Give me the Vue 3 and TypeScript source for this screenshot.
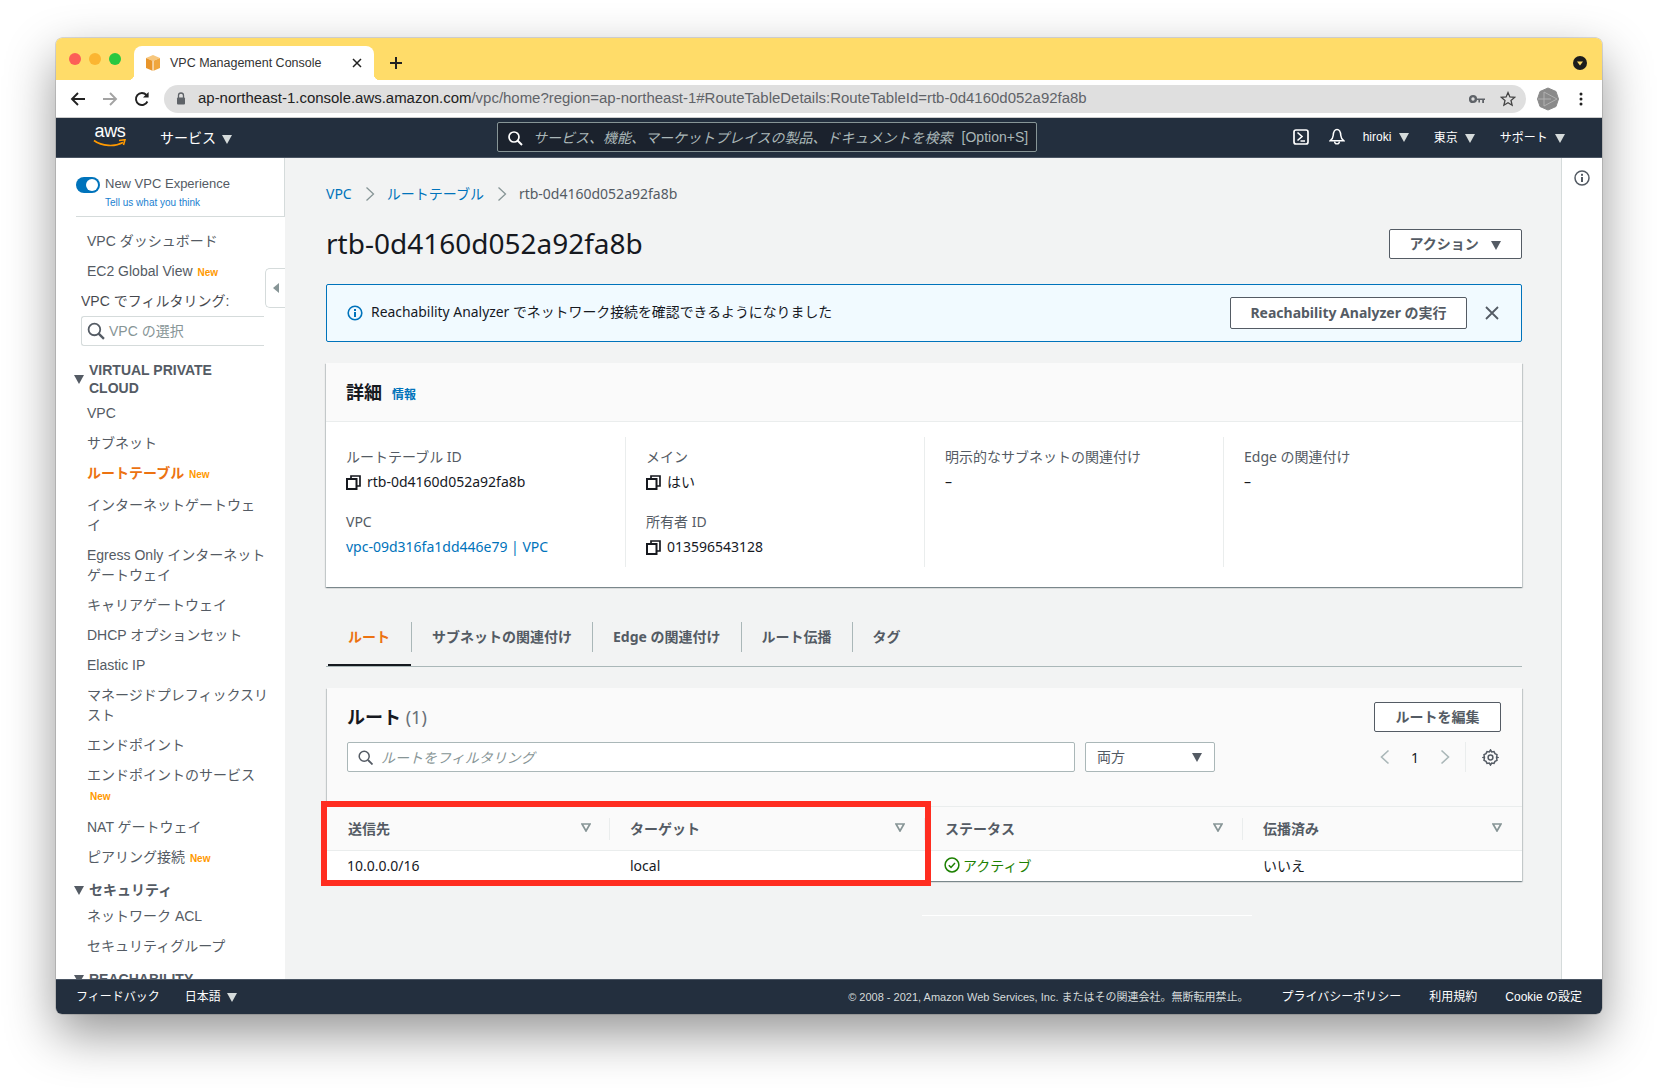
<template>
  <div class="page">
    <div class="window">
      <div class="titlebar">
        <div class="lights">
          <span class="light red"></span>
          <span class="light amber"></span>
          <span class="light green"></span>
        </div>
        <div class="tab">
          <svg class="tab-icon" width="16" height="18" viewBox="0 0 16 18">
            <polygon points="8,1 15,4 8,7 1,4" fill="#f7c77d" />
            <polygon points="1,4 8,7 8,17 1,14" fill="#e8952b" />
            <polygon points="15,4 8,7 8,17 15,14" fill="#f0a63e" />
            <line x1="8" y1="7" x2="8" y2="17" stroke="#fff" stroke-width="1" />
          </svg>
          <span class="tab-title">VPC Management Console</span>
          <svg class="tab-close" width="10" height="10" viewBox="0 0 10 10">
            <path d="M1 1l8 8M9 1l-8 8" stroke="#222" stroke-width="1.5" />
          </svg>
        </div>
        <svg class="new-tab" width="14" height="14" viewBox="0 0 14 14">
          <path d="M7 1v12M1 7h12" stroke="#222" stroke-width="2" />
        </svg>
        <svg class="profile-dot" width="14" height="14" viewBox="0 0 14 14">
          <circle cx="7" cy="7" r="7" fill="#1d1d1d" />
          <polygon points="4,5.5 10,5.5 7,9.5" fill="#ffdc69" />
        </svg>
      </div>

      <div class="toolbar">
        <svg class="tool" width="16" height="16" viewBox="0 0 16 16">
          <path d="M15 8H2M8 2L2 8l6 6" fill="none" stroke="#222" stroke-width="1.9" />
        </svg>
        <svg class="tool dim" width="16" height="16" viewBox="0 0 16 16">
          <path d="M1 8h13M8 2l6 6-6 6" fill="none" stroke="#a3a3a3" stroke-width="1.9" />
        </svg>
        <svg class="tool" width="16" height="16" viewBox="0 0 16 16">
          <path d="M13.4 10.5A6 6 0 1 1 12.4 4" fill="none" stroke="#222" stroke-width="1.9" />
          <polygon points="9,6.6 14.6,6.6 14.6,1" fill="#222" />
        </svg>
        <div class="urlbar">
          <svg width="10" height="13" viewBox="0 0 10 13">
            <path d="M2.5 6V3.5a2.5 2.5 0 0 1 5 0V6" fill="none" stroke="#5f6368" stroke-width="1.3" />
            <rect x="1" y="5.5" width="8" height="7" rx="1" fill="#5f6368" />
          </svg>
          <span class="url"><span class="url-host">ap-northeast-1.console.aws.amazon.com</span>/vpc/home?region=ap-northeast-1#RouteTableDetails:RouteTableId=rtb-0d4160d052a92fa8b</span>
          <svg class="url-key" width="16" height="10" viewBox="0 0 16 10">
            <circle cx="4" cy="5" r="2.9" fill="none" stroke="#5f6368" stroke-width="2.4" />
            <path d="M7 4.4h9v1.6h-1v3h-1.8V6H11v2.4H9.4V6H7z" fill="#5f6368" />
          </svg>
          <svg width="16" height="16" viewBox="0 0 16 16">
            <polygon points="8,1.6 9.9,6 14.6,6.4 11,9.5 12.1,14.2 8,11.7 3.9,14.2 5,9.5 1.4,6.4 6.1,6" fill="none" stroke="#444" stroke-width="1.3" />
          </svg>
        </div>
        <svg class="avatar" width="22" height="24" viewBox="0 0 22 24">
          <polygon points="11,1 19,4.5 21.5,12 19,19.5 11,23 3,19.5 .5,12 3,4.5" fill="#8a8a8a" stroke="#8a8a8a" stroke-linejoin="round" />
          <path d="M7 5v14l13-7z" fill="none" stroke="#b0b0b0" stroke-width="1" />
          <path d="M1 12h13" stroke="#b0b0b0" stroke-width="1" />
        </svg>
        <svg width="4" height="16" viewBox="0 0 4 16">
          <circle cx="2" cy="3" r="1.5" fill="#222" />
          <circle cx="2" cy="8" r="1.5" fill="#222" />
          <circle cx="2" cy="13" r="1.5" fill="#222" />
        </svg>
      </div>

      <header class="topnav">
        <div class="aws-logo">
          <span class="aws-text">aws</span>
          <svg width="34" height="9" viewBox="0 0 34 9">
            <path d="M1 1.5C9 7.5 22 8 30 3.5" fill="none" stroke="#f90" stroke-width="1.7" />
            <path d="M26 1.5l6-.8-1.5 5.3" fill="none" stroke="#f90" stroke-width="1.6" />
          </svg>
        </div>
        <span class="services">サービス <i class="tri"></i></span>
        <div class="global-search">
          <svg class="search-glass" width="16" height="16" viewBox="0 0 16 16">
            <circle cx="7" cy="7" r="5" fill="none" stroke="#fff" stroke-width="1.7" />
            <path d="M10.5 10.5L15 15" stroke="#fff" stroke-width="1.9" />
          </svg>
          <span class="search-hint">サービス、機能、マーケットプレイスの製品、ドキュメントを検索</span>
          <span class="search-key">[Option+S]</span>
        </div>
        <div class="nav-right">
          <svg width="16" height="16" viewBox="0 0 16 16">
            <rect x="1" y="1" width="14" height="14" rx="2" fill="none" stroke="#fff" stroke-width="1.7" />
            <path d="M4.5 3.5L9 7.5l-4.5 4M7.5 12h4.5" fill="none" stroke="#fff" stroke-width="1.6" />
          </svg>
          <svg class="bell" width="16" height="18" viewBox="0 0 16 18">
            <path d="M8 1.5c2.6 0 3.6 3 3.8 6 .1 2 1 3.6 3 5.3H1.2c2-1.7 2.9-3.3 3-5.3.2-3 1.2-6 3.8-6z" fill="none" stroke="#fff" stroke-width="1.5" />
            <path d="M5.6 13.5a2.4 2.4 0 0 0 4.8 0" fill="none" stroke="#fff" stroke-width="1.4" />
          </svg>
          <span class="nav-item user">hiroki <i class="tri"></i></span>
          <span class="nav-item region">東京 <i class="tri"></i></span>
          <span class="nav-item">サポート <i class="tri"></i></span>
        </div>
      </header>

      <div class="body">
        <aside class="sidebar">
          <div class="experience">
            <span class="toggle"><span class="knob"></span></span>
            <div>
              <div class="exp-title">New VPC Experience</div>
              <div class="exp-link">Tell us what you think</div>
            </div>
          </div>
          <nav class="side-nav">
            <a class="side-link">VPC ダッシュボード</a>
            <a class="side-link">EC2 Global View <em class="new">New</em></a>
            <div class="filter-label">VPC でフィルタリング:</div>
            <div class="vpc-filter">
              <svg width="18" height="18" viewBox="0 0 17 17">
                <circle cx="7" cy="7" r="5.5" fill="none" stroke="#545b64" stroke-width="1.7" />
                <path d="M11 11l5 5" stroke="#545b64" stroke-width="2.2" />
              </svg>
              <span>VPC の選択</span>
            </div>
            <div class="side-section first"><i class="tri dark"></i><span>VIRTUAL PRIVATE<br />CLOUD</span></div>
            <a class="side-link">VPC</a>
            <a class="side-link">サブネット</a>
            <a class="side-link active">ルートテーブル <em class="new">New</em></a>
            <a class="side-link">インターネットゲートウェ<br />イ</a>
            <a class="side-link">Egress Only インターネット<br />ゲートウェイ</a>
            <a class="side-link">キャリアゲートウェイ</a>
            <a class="side-link">DHCP オプションセット</a>
            <a class="side-link">Elastic IP</a>
            <a class="side-link">マネージドプレフィックスリ<br />スト</a>
            <a class="side-link">エンドポイント</a>
            <a class="side-link">エンドポイントのサービス<br /><em class="new solo">New</em></a>
            <a class="side-link">NAT ゲートウェイ</a>
            <a class="side-link">ピアリング接続 <em class="new">New</em></a>
            <div class="side-section second"><i class="tri dark"></i><span>セキュリティ</span></div>
            <a class="side-link">ネットワーク ACL</a>
            <a class="side-link">セキュリティグループ</a>
            <div class="side-section"><i class="tri dark"></i><span>REACHABILITY</span></div>
          </nav>
          <div class="collapse-tab"><i class="tri-left"></i></div>
        </aside>

        <main class="main">
          <div class="breadcrumb">
            <a class="link">VPC</a>
            <svg class="crumb-sep" width="10" height="16" viewBox="0 0 10 16"><path d="M1.5 1.5L8.5 8l-7 6.5" fill="none" stroke="#879596" stroke-width="1.3" /></svg>
            <a class="link">ルートテーブル</a>
            <svg class="crumb-sep" width="10" height="16" viewBox="0 0 10 16"><path d="M1.5 1.5L8.5 8l-7 6.5" fill="none" stroke="#879596" stroke-width="1.3" /></svg>
            <span>rtb-0d4160d052a92fa8b</span>
          </div>

          <div class="title-row">
            <h1>rtb-0d4160d052a92fa8b</h1>
            <button class="btn action">アクション <i class="tri grey"></i></button>
          </div>

          <div class="alert">
            <svg width="16" height="16" viewBox="0 0 16 16">
              <circle cx="8" cy="8" r="6.8" fill="none" stroke="#0073bb" stroke-width="1.6" />
              <rect x="7" y="7" width="2" height="5" fill="#0073bb" />
              <rect x="7" y="4" width="2" height="2" fill="#0073bb" />
            </svg>
            <span class="alert-text">Reachability Analyzer でネットワーク接続を確認できるようになりました</span>
            <button class="btn alert-btn">Reachability Analyzer の実行</button>
            <svg class="alert-close" width="14" height="14" viewBox="0 0 14 14">
              <path d="M1 1l12 12M13 1L1 13" stroke="#545b64" stroke-width="1.8" />
            </svg>
          </div>

          <section class="card">
            <div class="card-head">
              <h2>詳細</h2>
              <a class="info-link">情報</a>
            </div>
            <div class="detail-grid">
              <div class="detail-col">
                <div class="field">
                  <div class="field-label">ルートテーブル ID</div>
                  <div class="field-value"><svg class="copy" width="15" height="15" viewBox="0 0 15 15"><use href="#copy-icon" /></svg>rtb-0d4160d052a92fa8b</div>
                </div>
                <div class="field">
                  <div class="field-label">VPC</div>
                  <div class="field-value"><a class="link">vpc-09d316fa1dd446e79 | VPC</a></div>
                </div>
              </div>
              <div class="detail-col">
                <div class="field">
                  <div class="field-label">メイン</div>
                  <div class="field-value"><svg class="copy" width="15" height="15" viewBox="0 0 15 15"><use href="#copy-icon" /></svg>はい</div>
                </div>
                <div class="field">
                  <div class="field-label">所有者 ID</div>
                  <div class="field-value"><svg class="copy" width="15" height="15" viewBox="0 0 15 15"><use href="#copy-icon" /></svg>013596543128</div>
                </div>
              </div>
              <div class="detail-col">
                <div class="field">
                  <div class="field-label">明示的なサブネットの関連付け</div>
                  <div class="field-value">–</div>
                </div>
              </div>
              <div class="detail-col">
                <div class="field">
                  <div class="field-label">Edge の関連付け</div>
                  <div class="field-value">–</div>
                </div>
              </div>
            </div>
          </section>

          <div class="tabs">
            <span v-for="(t, i) in tabs" :key="t" class="tab-item" :class="{ current: i === 0 }">{{ t }}</span>
          </div>

          <section class="routes">
            <div class="routes-head">
              <div class="routes-title">
                <h2>ルート <span class="count">(1)</span></h2>
                <button class="btn edit">ルートを編集</button>
              </div>
              <div class="routes-tools">
                <div class="route-filter">
                  <svg width="15" height="15" viewBox="0 0 15 15">
                    <circle cx="6.2" cy="6.2" r="5" fill="none" stroke="#545b64" stroke-width="1.5" />
                    <path d="M10 10l4.5 4.5" stroke="#545b64" stroke-width="1.8" />
                  </svg>
                  <span>ルートをフィルタリング</span>
                </div>
                <div class="route-select"><span>両方</span> <i class="tri grey"></i></div>
                <div class="pager">
                  <svg width="10" height="16" viewBox="0 0 10 16"><path d="M8.5 1.5L1.5 8l7 6.5" fill="none" stroke="#aab7b8" stroke-width="1.6" /></svg>
                  <span class="page-no">1</span>
                  <svg width="10" height="16" viewBox="0 0 10 16"><path d="M1.5 1.5L8.5 8l-7 6.5" fill="none" stroke="#aab7b8" stroke-width="1.6" /></svg>
                </div>
                <div class="settings">
                  <svg width="17" height="17" viewBox="0 0 17 17">
                    <path d="M8.5 1l1.2 2 2.3-.4 1 2 2 1-.4 2.4 1 .5-1 .5.4 2.4-2 1-1 2-2.3-.4-1.2 2-1.2-2-2.3.4-1-2-2-1 .4-2.4-1-.5 1-.5-.4-2.4 2-1 1-2 2.3.4z" fill="none" stroke="#545b64" stroke-width="1.5" />
                    <circle cx="8.5" cy="8.5" r="2.4" fill="none" stroke="#545b64" stroke-width="1.5" />
                  </svg>
                </div>
              </div>
            </div>

            <div class="table-wrap">
              <div class="t-row t-head">
                <div v-for="c in columns" :key="c" class="t-cell">
                  <span>{{ c }}</span>
                  <svg width="10" height="9" viewBox="0 0 10 9"><polygon points="1,1 9,1 5,8" fill="none" stroke="#879596" stroke-width="1.7" /></svg>
                </div>
              </div>
              <div class="t-row t-body">
                <div class="t-cell">10.0.0.0/16</div>
                <div class="t-cell">local</div>
                <div class="t-cell status">
                  <svg width="16" height="16" viewBox="0 0 16 16">
                    <circle cx="8" cy="8" r="6.9" fill="none" stroke="#1d8102" stroke-width="1.5" />
                    <path d="M4.8 8.2l2.2 2.2 4-4.4" fill="none" stroke="#1d8102" stroke-width="1.5" />
                  </svg>
                  アクティブ
                </div>
                <div class="t-cell">いいえ</div>
              </div>
              <div class="red-box"></div>
            </div>
          </section>
          <div class="page-end"></div>
        </main>

        <div class="help-rail">
          <svg width="16" height="16" viewBox="0 0 16 16">
            <circle cx="8" cy="8" r="7" fill="none" stroke="#545b64" stroke-width="1.5" />
            <rect x="7" y="7" width="2" height="5" fill="#545b64" />
            <rect x="7" y="3.8" width="2" height="2" fill="#545b64" />
          </svg>
        </div>
      </div>

      <footer class="footer">
        <span class="foot-link feedback">フィードバック</span>
        <span class="foot-link">日本語 <i class="tri"></i></span>
        <span class="copyright">© 2008 - 2021, Amazon Web Services, Inc. またはその関連会社。無断転用禁止。</span>
        <span class="foot-link">プライバシーポリシー</span>
        <span class="foot-link">利用規約</span>
        <span class="foot-link">Cookie の設定</span>
      </footer>

      <svg width="0" height="0" class="defs">
        <symbol id="copy-icon" viewBox="0 0 15 15">
          <path d="M5 3V1h9v10h-3" fill="none" stroke="#16191f" stroke-width="1.7" />
          <rect x="1" y="4" width="9.5" height="10" fill="none" stroke="#16191f" stroke-width="2" />
        </symbol>
      </svg>
    </div>
  </div>
</template>

<script setup lang="ts">
const tabs: string[] = ['ルート', 'サブネットの関連付け', 'Edge の関連付け', 'ルート伝播', 'タグ']
const columns: string[] = ['送信先', 'ターゲット', 'ステータス', '伝播済み']
</script>

<style scoped>
.page {
  height: 1088px;
  box-sizing: border-box;
  padding: 38px 0 0 56px;
  overflow: hidden;
}

.window {
  width: 1546px;
  height: 976px;
  display: flex;
  flex-direction: column;
  border-radius: 6px;
  overflow: hidden;
  box-shadow: 0 0 0 0.5px rgba(0, 0, 0, 0.25), 0 20px 50px rgba(0, 0, 0, 0.42);
  font-family: "Noto Sans", "Noto Sans CJK JP", sans-serif;
  color: #16191f;
  font-size: 14px;
}

.defs {
  position: absolute;
}

.titlebar {
  height: 42px;
  flex: none;
  background: #ffdc69;
  display: flex;
  align-items: flex-end;
}

.lights {
  display: flex;
  gap: 8px;
  padding: 0 13px;
  align-self: flex-start;
  margin-top: 15px;
}

.light {
  width: 12px;
  height: 12px;
  border-radius: 50%;
}

.red { background: #fc5f57; }
.amber { background: #fbb531; }
.green { background: #28c840; }

.tab {
  width: 240px;
  height: 34px;
  background: #fff;
  border-radius: 8px 8px 0 0;
  display: flex;
  align-items: center;
  padding: 0 12px 0 11px;
  box-sizing: border-box;
  position: relative;
}

.tab::before,
.tab::after {
  content: "";
  position: absolute;
  bottom: 0;
  width: 6px;
  height: 6px;
}

.tab::before {
  left: -6px;
  background: radial-gradient(circle at 0 0, #ffdc69 6px, #fff 6.5px);
}

.tab::after {
  right: -6px;
  background: radial-gradient(circle at 100% 0, #ffdc69 6px, #fff 6.5px);
}

.tab-icon {
  margin-right: 9px;
}

.tab-title {
  flex: 1;
  font-family: "Liberation Sans", sans-serif;
  font-size: 12.5px;
  color: #333;
}

.new-tab {
  margin: 0 0 10px 15px;
}

.profile-dot {
  margin: 0 15px 10px auto;
}

.toolbar {
  height: 38px;
  flex: none;
  box-sizing: border-box;
  background: #fff;
  border-bottom: 1px solid #ccc;
  display: flex;
  align-items: center;
  padding-left: 14px;
}

.tool {
  margin-right: 16px;
}

.urlbar {
  width: 1362px;
  height: 28px;
  margin-left: -2px;
  background: #dfdfdf;
  border-radius: 14px;
  display: flex;
  align-items: center;
  padding: 0 10px 0 12px;
  box-sizing: border-box;
}

.url {
  margin-left: 12px;
  padding-bottom: 2px;
  flex: 1;
  font-family: "Liberation Sans", sans-serif;
  font-size: 14.96px;
  color: #5f6368;
  white-space: nowrap;
}

.url-host {
  color: #222;
}

.url-key {
  margin-right: 15px;
}

.avatar {
  margin: 0 20px 0 11px;
}

.topnav {
  height: 40px;
  flex: none;
  background: #232f3e;
  border-bottom: 1px solid #4a5563;
  box-sizing: border-box;
  padding-bottom: 2px;
  display: flex;
  align-items: center;
  color: #fff;
  font-family: "Liberation Sans", "Noto Sans CJK JP", sans-serif;
}

.aws-logo {
  width: 34px;
  margin-left: 37px;
  display: flex;
  flex-direction: column;
  align-items: center;
}

.aws-text {
  font-size: 18px;
  line-height: 15px;
  margin-top: -2px;
  letter-spacing: -0.3px;
}

.nav-item {
  font-size: 12px;
  white-space: nowrap;
}

.services {
  margin-left: 33px;
  width: 77px;
  font-size: 14px;
  white-space: nowrap;
}

.services .tri {
  margin-left: 2px;
}

.tri {
  display: inline-block;
  width: 0;
  height: 0;
  border-left: 5px solid transparent;
  border-right: 5px solid transparent;
  border-top: 9px solid #d5dbdb;
  margin-left: 4px;
  vertical-align: -1px;
}

.tri.dark {
  border-top-color: #545b64;
  margin: 0;
}

.tri.grey {
  border-top-color: #545b64;
}

.global-search {
  width: 540px;
  height: 30px;
  margin-left: 260px;
  box-sizing: border-box;
  border: 1px solid #879596;
  border-radius: 2px;
  background: #1b222d;
  display: flex;
  align-items: center;
  padding-left: 9px;
  color: #aab7b8;
}

.search-glass {
  margin-top: 3px;
}

.search-hint {
  margin-left: 10px;
  font-style: italic;
  font-size: 14px;
  white-space: nowrap;
}

.search-key {
  margin-left: 9px;
  font-size: 14px;
  white-space: nowrap;
}

.nav-right {
  margin-left: auto;
  display: flex;
  align-items: center;
  padding-right: 37px;
}

.bell {
  margin-left: 20px;
}

.user {
  margin-left: 18px;
  width: 71px;
}

.region {
  width: 66px;
}

.body {
  flex: 1;
  min-height: 0;
  display: flex;
  background: #f2f3f3;
}

.sidebar {
  width: 229px;
  flex: none;
  background: #fff;
  position: relative;
  font-family: "Liberation Sans", "Noto Sans CJK JP", sans-serif;
  color: #545b64;
  overflow: hidden;
}

.experience {
  height: 59px;
  box-sizing: border-box;
  margin-left: 20px;
  padding-top: 17px;
  display: flex;
  gap: 5px;
  border-bottom: 1px solid #d5dbdb;
  border-right: 1px solid #d5dbdb;
}

.toggle {
  width: 24px;
  height: 16px;
  margin-top: 2px;
  flex: none;
  background: #0073bb;
  border-radius: 8px;
  display: flex;
  justify-content: flex-end;
  align-items: center;
  padding-right: 2px;
  box-sizing: border-box;
}

.knob {
  width: 12px;
  height: 12px;
  border-radius: 50%;
  background: #fff;
}

.exp-title {
  font-size: 13px;
  line-height: 18px;
}

.exp-link {
  font-size: 10px;
  line-height: 12px;
  margin-top: 4px;
  color: #1a7fd0;
}

.side-nav {
  padding: 14px 17px 0 31px;
  line-height: 20px;
  font-size: 14px;
  white-space: nowrap;
}

.side-link {
  display: block;
  margin-bottom: 10px;
}

.side-link.active {
  color: #ec7211;
  font-weight: 700;
}

.new {
  font-style: normal;
  font-weight: 700;
  font-size: 10px;
  color: #ff9900;
  margin-left: 1px;
}

.new.solo {
  margin-left: 3px;
}

.filter-label {
  margin: -2px 0 0 -6px;
  color: #16191f;
  opacity: 0.8;
}

.vpc-filter {
  margin: 5px 4px 0 -6px;
  height: 30px;
  box-sizing: border-box;
  border: 1px solid #d5dbdb;
  border-right: none;
  border-radius: 3px 0 0 3px;
  display: flex;
  align-items: center;
  padding-left: 5px;
  gap: 4px;
  color: #879596;
}

.side-section {
  display: flex;
  align-items: center;
  gap: 5px;
  margin: 14px 0 7px -13px;
  font-weight: 700;
  line-height: 18px;
  color: #545b64;
}

.side-section.first {
  margin: 15px 0 6px -13px;
}

.side-section.second {
  margin: 12px 0 7px -13px;
}

.collapse-tab {
  position: absolute;
  top: 110px;
  right: 0;
  width: 20px;
  height: 40px;
  box-sizing: border-box;
  border: 1px solid #d5dbdb;
  border-right: none;
  border-radius: 5px 0 0 5px;
  background: #fff;
  display: flex;
  align-items: center;
  justify-content: center;
}

.tri-left {
  width: 0;
  height: 0;
  border-top: 5px solid transparent;
  border-bottom: 5px solid transparent;
  border-right: 6px solid #879596;
}

.main {
  flex: 1;
  min-width: 0;
  padding: 26px 39px 0 41px;
}

.link {
  color: #0073bb;
}

.breadcrumb {
  height: 20px;
  display: flex;
  align-items: center;
  color: #545b64;
  line-height: 20px;
}

.crumb-sep {
  margin: 0 12px 0 13px;
}

.title-row {
  height: 30px;
  margin-top: 25px;
  display: flex;
  justify-content: space-between;
  align-items: center;
}

h1 {
  margin: 0;
  font-size: 28px;
  font-weight: 400;
  line-height: 30px;
  padding-bottom: 2px;
}

.btn {
  font-family: inherit;
  font-size: 14px;
  font-weight: 700;
  color: #545b64;
  background: #fff;
  border: 1px solid #545b64;
  border-radius: 2px;
  padding: 0 0 2px;
  box-sizing: border-box;
  white-space: nowrap;
}

.action {
  width: 133px;
  height: 30px;
}

.action .tri {
  margin-left: 9px;
}

.alert {
  height: 58px;
  margin-top: 25px;
  box-sizing: border-box;
  background: #f1faff;
  border: 1px solid #0073bb;
  border-radius: 2px;
  display: flex;
  align-items: center;
  padding: 0 22px 0 20px;
}

.alert-text {
  flex: 1;
  margin-left: 8px;
  padding-bottom: 4px;
  font-size: 13.9px;
}

.alert-btn {
  width: 237px;
  height: 32px;
}

.alert-close {
  margin-left: 18px;
}

.card {
  height: 224px;
  margin-top: 21px;
  background: #fff;
  box-shadow: 0 1px 1px 0 rgba(0, 28, 36, 0.3), 1px 1px 1px 0 rgba(0, 28, 36, 0.15), -1px 1px 1px 0 rgba(0, 28, 36, 0.15);
}

.card-head {
  height: 59px;
  box-sizing: border-box;
  background: #fafafa;
  border-bottom: 1px solid #eaeded;
  padding-left: 20px;
  display: flex;
  align-items: center;
  gap: 12px;
}

h2 {
  margin: 0;
  font-size: 18px;
  font-weight: 700;
  line-height: 24px;
}

.info-link {
  font-size: 12px;
  font-weight: 700;
  color: #0073bb;
  padding-top: 4px;
  margin-left: -2px;
}

.detail-grid {
  display: grid;
  grid-template-columns: 300px 299px 299px 298px;
  padding-top: 15px;
}

.detail-col {
  height: 130px;
  box-sizing: border-box;
  padding-left: 20px;
  border-right: 1px solid #eaeded;
}

.detail-col:last-child {
  border-right: none;
}

.field {
  height: 65px;
  padding-top: 10px;
  box-sizing: border-box;
}

.field-label {
  line-height: 20px;
  color: #545b64;
}

.field-value {
  line-height: 20px;
  margin-top: 5px;
  display: flex;
  align-items: center;
}

.copy {
  margin-right: 6px;
}

.tabs {
  height: 45px;
  margin-top: 35px;
  box-sizing: border-box;
  border-bottom: 1px solid #aab7b8;
  display: flex;
}

.tab-item {
  height: 30px;
  line-height: 30px;
  padding: 0 20px;
  color: #545b64;
  font-weight: 700;
  border-right: 1px solid #aab7b8;
  white-space: nowrap;
}

.tab-item:last-child {
  border-right: none;
}

.tab-item.current {
  width: 84px;
  margin-left: 2px;
  box-sizing: border-box;
  color: #ec7211;
  position: relative;
}

.tab-item.current::after {
  content: "";
  position: absolute;
  left: 0;
  right: 0;
  top: 42px;
  height: 2px;
  background: #16191f;
}

.routes {
  margin: 21px 0 0 1px;
  background: #fff;
  box-shadow: 0 1px 1px 0 rgba(0, 28, 36, 0.3), 1px 1px 1px 0 rgba(0, 28, 36, 0.15), -1px 1px 1px 0 rgba(0, 28, 36, 0.15);
}

.routes-head {
  height: 119px;
  box-sizing: border-box;
  background: #fafafa;
  border-bottom: 1px solid #eaeded;
  padding: 14px 20px 0;
}

.routes-title {
  display: flex;
  justify-content: space-between;
  align-items: center;
  height: 30px;
}

.count {
  font-weight: 400;
  color: #687078;
}

.edit {
  width: 127px;
  height: 30px;
  margin-right: 1px;
}

.routes-tools {
  display: flex;
  align-items: center;
  margin-top: 10px;
  height: 30px;
}

.route-filter {
  width: 728px;
  height: 30px;
  box-sizing: border-box;
  background: #fff;
  border: 1px solid #aab7b8;
  border-radius: 2px;
  display: flex;
  align-items: center;
  gap: 8px;
  padding-left: 10px;
  font-style: italic;
  color: #879596;
}

.route-select {
  width: 130px;
  height: 30px;
  margin-left: 10px;
  box-sizing: border-box;
  background: #fff;
  border: 1px solid #aab7b8;
  border-radius: 2px;
  display: flex;
  align-items: center;
  justify-content: space-between;
  padding: 0 12px 0 11px;
  color: #545b64;
}

.route-select span {
  padding-bottom: 2px;
}

.pager {
  display: flex;
  align-items: center;
  margin-left: 165px;
}

.page-no {
  width: 50px;
  text-align: center;
}

.settings {
  height: 30px;
  margin-left: 15px;
  padding-left: 16px;
  display: flex;
  align-items: center;
  border-left: 1px solid #eaeded;
}

.table-wrap {
  position: relative;
}

.t-row {
  display: grid;
  grid-template-columns: 283px 315px 318px 1fr;
}

.t-head {
  height: 44px;
  background: #fafafa;
  border-bottom: 1px solid #eaeded;
  box-sizing: border-box;
  align-items: center;
  font-weight: 700;
  color: #545b64;
}

.t-head .t-cell {
  height: 22px;
  display: flex;
  justify-content: space-between;
  align-items: center;
  border-right: 1px solid #eaeded;
  padding: 0 19px 2px 20px;
  box-sizing: border-box;
}

.t-head .t-cell:first-child {
  padding-left: 21px;
  padding-right: 18px;
}

.t-head .t-cell:last-child {
  border-right: none;
  padding-right: 20px;
}

.t-body {
  height: 30px;
  align-items: center;
}

.t-body .t-cell {
  padding-left: 20px;
  padding-bottom: 2px;
}

.t-body .status {
  display: flex;
  align-items: center;
  gap: 3px;
  color: #1d8102;
  padding-left: 19px;
}

.red-box {
  position: absolute;
  left: -6px;
  top: -6px;
  width: 610px;
  height: 85px;
  box-sizing: border-box;
  border: 6px solid #ff2d20;
}

.page-end {
  width: 330px;
  height: 1px;
  margin: 34px 0 0 596px;
  background: #fff;
}

.help-rail {
  width: 41px;
  flex: none;
  box-sizing: border-box;
  background: #fff;
  border-left: 1px solid #d5dbdb;
  padding: 12px 0 0 12px;
}

.footer {
  height: 35px;
  flex: none;
  box-sizing: border-box;
  background: #232f3e;
  border-top: 1px solid #4a5563;
  display: flex;
  align-items: center;
  padding: 0 20px 3px;
  color: #fff;
  font-family: "Liberation Sans", "Noto Sans CJK JP", sans-serif;
  font-size: 12px;
}

.feedback {
  margin-right: 25px;
}

.foot-link .tri {
  margin-left: 3px;
}

.copyright {
  margin-left: auto;
  margin-right: 33px;
  font-size: 11px;
  color: #d5dbdb;
}

.copyright ~ .foot-link + .foot-link {
  margin-left: 28px;
}
</style>

<style>
html, body {
  background: #fff;
}
</style>
